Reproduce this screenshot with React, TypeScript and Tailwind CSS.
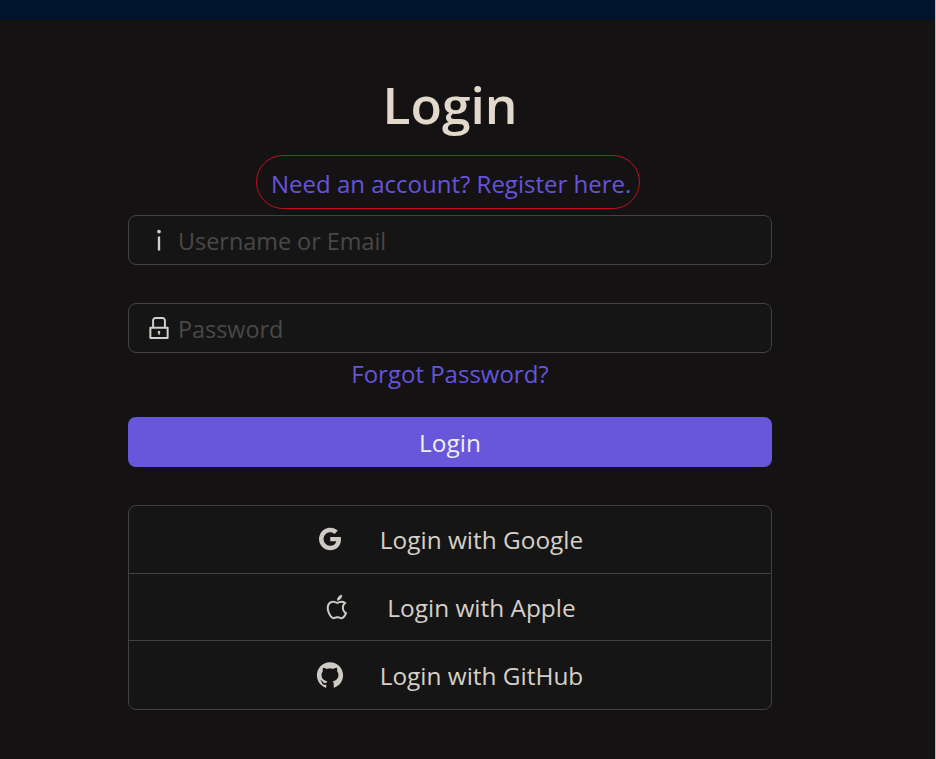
import type { ReactNode } from "react";
import { AiOutlineInfo, AiOutlineLock, AiOutlineGoogle, AiOutlineApple, AiOutlineGithub } from "react-icons/ai";

function Field({ icon, placeholder, type }: { icon: ReactNode; placeholder: string; type: string }) {
  return (
    <div className="flex h-[50px] items-center rounded-lg border border-[#424242] bg-[#151515] pl-[19px] pr-3">
      <span className="flex w-[22px] shrink-0 justify-center text-[#d4cfc9]">{icon}</span>
      <input
        type={type}
        placeholder={placeholder}
        className="ml-2 w-full bg-transparent pt-[4px] text-[23.4px] text-[#dcd8d2] outline-none placeholder:text-[#4a4846]"
      />
    </div>
  );
}

function Provider({ icon, label, last }: { icon: ReactNode; label: string; last?: boolean }) {
  return (
    <button className={`flex h-[67.5px] w-full items-center justify-center gap-[35px] pr-[2px] text-[24.4px] text-[#d6d0c8] ${last ? "" : "border-b border-[#424242]"}`}>
      <span className="text-[30px] text-[#cfcac4]">{icon}</span>
      <span className="pt-[3px]">{label}</span>
    </button>
  );
}

export default function App() {
  return (
    <div className="flex min-h-[759px] flex-col border-r border-[#b8b8b8] bg-[#151214] font-['Open_Sans',sans-serif]">
      <div className="h-5 bg-[#00152b]" />
      <div className="w-[900px]">
        <main className="mx-auto flex w-[644px] flex-col">
          <h1 className="mt-[49px] text-center text-[51.5px] font-semibold leading-[70px] text-[#e2d8cc]">Login</h1>
          <a className="ml-[128px] mt-[16px] block w-[384px] whitespace-nowrap rounded-full border border-[#c01020] pb-[8px] pl-[14px] pr-[9px] pt-[12px] text-[24px] leading-[32px] text-[#6554dc]">
            Need an account? Register here.
          </a>
          <div className="mt-[6px]">
            <Field icon={<AiOutlineInfo className="size-[30px] shrink-0" />} placeholder="Username or Email" type="text" />
          </div>
          <div className="mt-[38px]">
            <Field icon={<AiOutlineLock className="size-[28px] shrink-0" />} placeholder="Password" type="password" />
          </div>
          <a className="mt-[5px] text-center text-[24px] leading-[32px] text-[#6554dc]">Forgot Password?</a>
          <button className="mt-[27px] h-[50px] rounded-lg bg-[#6856db] pt-[2px] text-[24.4px] text-[#f2efea]">Login</button>
          <div className="mt-[38px] rounded-lg border border-[#424242] bg-[#151515]">
            <Provider icon={<AiOutlineGoogle />} label="Login with Google" />
            <Provider icon={<AiOutlineApple />} label="Login with Apple" />
            <Provider icon={<AiOutlineGithub />} label="Login with GitHub" last />
          </div>
        </main>
      </div>
    </div>
  );
}
